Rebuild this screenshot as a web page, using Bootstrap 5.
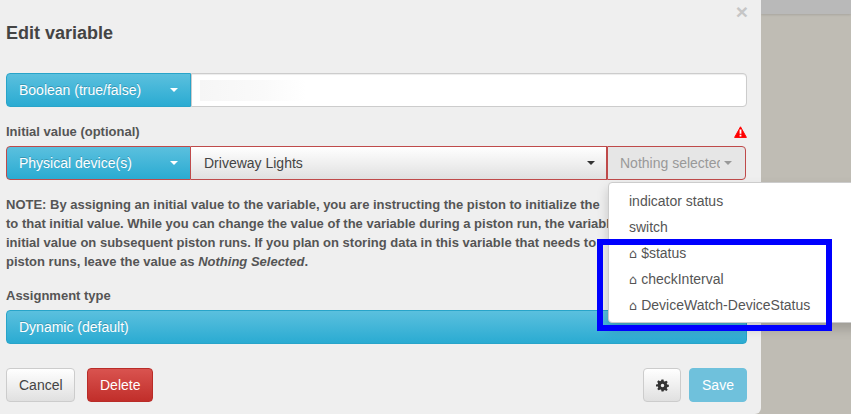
<!DOCTYPE html>
<html lang="en">
  <head>
    <meta charset="UTF-8" />
    <meta name="viewport" content="width=device-width, initial-scale=1.0" />
    <title>Edit variable</title>
    <link
      href="https://cdn.jsdelivr.net/npm/bootstrap@5.3.0/dist/css/bootstrap.min.css"
      rel="stylesheet"
    />
    <style>
      html, body { height: 100%; }
      body {
        background: #bfbcb4;
        font-family: "Liberation Sans", Arial, sans-serif;
        font-size: 14px;
        color: #555;
        overflow: hidden;
      }
      .page-wrap { height: 414px; position: relative; }
      .edit-panel {
        width: 761px;
        height: 414px;
        flex: none;
        background: #efefef;
        border-bottom-right-radius: 6px;
        padding: 0 14px 0 6px;
        position: relative;
      }
      .side-strip { height: 14px; background: #b9b9b9; box-shadow: 0 1px 2px rgba(0,0,0,.12); }
      .close-x {
        position: absolute; top: 1px; right: 13px;
        font-size: 21px; line-height: 21px; font-weight: 700; color: #c6c6c6;
      }
      .panel-title { font-size: 18px; line-height: 20px; font-weight: 700; color: #444; margin: 23px 0 30px; }
      .field-label { font-size: 13px; line-height: 15px; font-weight: 700; color: #555; }
      .btn { font-size: 14px; line-height: 20px; padding: 6px 12px; border-radius: 4px; height: 34px; }
      .grad-info, .grad-info:hover {
        background: linear-gradient(#5bc0de, #2aabd2); border: 1px solid #28a4c9; color: #fff;
        text-shadow: 0 -1px 0 rgba(0,0,0,.2);
      }
      .grad-default, .grad-default:hover {
        background: linear-gradient(#fff, #e0e0e0); border: 1px solid #ccc; color: #444;
      }
      .grad-danger, .grad-danger:hover {
        background: linear-gradient(#d9534f, #c12e2a); border: 1px solid #b92c28; color: #fff;
      }
      .type-btn { width: 185px; text-align: left; display: flex; align-items: center; justify-content: space-between; padding-right: 12px; flex: none; }
      .dropdown-toggle::after { margin-left: 0; flex: none; }
      .name-input { height: 34px; font-size: 14px; border: 1px solid #ccc; border-radius: 0 4px 4px 0; box-shadow: inset 0 1px 1px rgba(0,0,0,.075); padding: 6px 8px; }
      .blur-box { width: 106px; height: 21px; background: linear-gradient(90deg, #f6f6f6, #fafafa 60%, #fff); }
      .row-error .btn { border-color: #bf4a4a; }
      .row-error { height: 34px; width: 740px; }
      .device-btn { flex: 1 1 auto; text-align: left; display: flex; align-items: center; justify-content: space-between; border-radius: 0; border-left: 0; padding-left: 13px; padding-right: 11px; }
      .device-btn::after { color: #333; }
      .none-btn { width: 139px; flex: none; background: #e6e6e6; color: #999; border-radius: 0 4px 4px 0; border-left-width: 1px; display: flex; align-items: center; padding: 6px 12px; white-space: nowrap; }
      .none-btn:hover { background: #e6e6e6; color: #999; }
      .none-text { width: 100px; margin-right: 4px; overflow: hidden; display: block; text-align: left; flex: none; }
      .note-text { font-size: 13px; line-height: 19px; font-weight: 700; color: #555; margin: 15px 0 0; white-space: nowrap; }
      .wide-btn { width: 741px; text-align: left; display: block; }
      .save-btn { background: #6fc1dc; border: 1px solid #6fc1dc; color: #fff; width: 58px; }
      .save-btn:hover { background: #6fc1dc; color: #fff; }
      .gear-btn { width: 38px; display: flex; align-items: center; justify-content: center; padding: 0; }
      .value-menu {
        position: absolute; left: 608px; top: 182px; width: 260px; height: 141px;
        background: #fff; border: 1px solid #ccc; border-radius: 4px; padding: 5px 0;
        box-shadow: 0 6px 12px rgba(0,0,0,.175); color: #555; z-index: 2;
      }
      .value-item { padding: 0 20px; height: 26px; line-height: 26px; font-size: 14px; white-space: nowrap; }
      .house-glyph { font-family: "DejaVu Sans", sans-serif; font-size: 13px; }
      .blue-mark { position: absolute; left: 597px; top: 239px; width: 235px; height: 92px; border: 6px solid #0000ff; z-index: 3; }
    </style>
  </head>
  <body>
    <div class="page-wrap d-flex">
      <div class="edit-panel">
        <span class="close-x">×</span>
        <div class="panel-title">Edit variable</div>

        <div class="d-flex">
          <button class="btn grad-info dropdown-toggle type-btn" style="border-radius: 4px 0 0 4px">Boolean (true/false)</button>
          <div class="form-control name-input d-flex align-items-center"><div class="blur-box"></div></div>
        </div>

        <div class="d-flex justify-content-between align-items-center field-label" style="margin: 17px 0 7px">
          <span>Initial value (optional)</span>
          <svg width="13" height="12" viewBox="0 0 13 12"><path fill="#f00" stroke="#f00" stroke-width="1" stroke-linejoin="round" d="M6.5 .8 12.4 11.4H.6Z"/><path fill="#fff" d="M5.6 3.5h1.8v4.2H5.6zM5.6 8.7h1.8v1.7H5.6z"/></svg>
        </div>

        <div class="d-flex row-error">
          <button class="btn grad-info dropdown-toggle type-btn" style="border-radius: 4px 0 0 4px">Physical device(s)</button>
          <button class="btn grad-default dropdown-toggle device-btn">Driveway Lights</button>
          <button class="btn dropdown-toggle none-btn"><span class="none-text">Nothing selected</span></button>
        </div>

        <p class="note-text">NOTE: By assigning an initial value to the variable, you are instructing the piston to initialize the<br />to that initial value. While you can change the value of the variable during a piston run, the variable<br />initial value on subsequent piston runs. If you plan on storing data in this variable that needs to<br />piston runs, leave the value as <em>Nothing Selected</em>.</p>

        <div class="field-label" style="margin: 17px 0 7px">Assignment type</div>
        <button class="btn grad-info wide-btn">Dynamic (default)</button>

        <div class="d-flex align-items-center" style="margin-top: 24px">
          <button class="btn grad-default" style="width: 69px">Cancel</button>
          <button class="btn grad-danger" style="width: 66px; margin-left: 12px">Delete</button>
          <button class="btn grad-default gear-btn ms-auto">
            <svg width="13" height="13" viewBox="-1 -1 26 26"><path fill="#333" fill-rule="evenodd" d="M10 0h4l.7 3.4 2 .8 2.9-1.9 2.8 2.8-1.9 2.9.8 2 3.4.7v4l-3.4.7-.8 2 1.9 2.9-2.8 2.8-2.9-1.9-2 .8L14 24h-4l-.7-3.4-2-.8-2.9 1.9-2.8-2.8 1.9-2.9-.8-2L-1 14v-4l3.4-.7.8-2-1.9-2.9 2.8-2.8 2.9 1.9 2-.8ZM12 8.5a3.5 3.5 0 1 0 0 7 3.5 3.5 0 0 0 0-7Z"/></svg>
          </button>
          <button class="btn save-btn" style="margin-left: 8px">Save</button>
        </div>
      </div>

      <div class="flex-grow-1"><div class="side-strip"></div></div>

      <div class="value-menu">
        <div class="value-item">indicator status</div>
        <div class="value-item">switch</div>
        <div class="value-item"><span class="house-glyph">⌂</span> $status</div>
        <div class="value-item"><span class="house-glyph">⌂</span> checkInterval</div>
        <div class="value-item"><span class="house-glyph">⌂</span> DeviceWatch-DeviceStatus</div>
      </div>
      <div class="blue-mark"></div>
    </div>
    <script src="https://cdn.jsdelivr.net/npm/bootstrap@5.3.0/dist/js/bootstrap.bundle.min.js"></script>
  </body>
</html>
